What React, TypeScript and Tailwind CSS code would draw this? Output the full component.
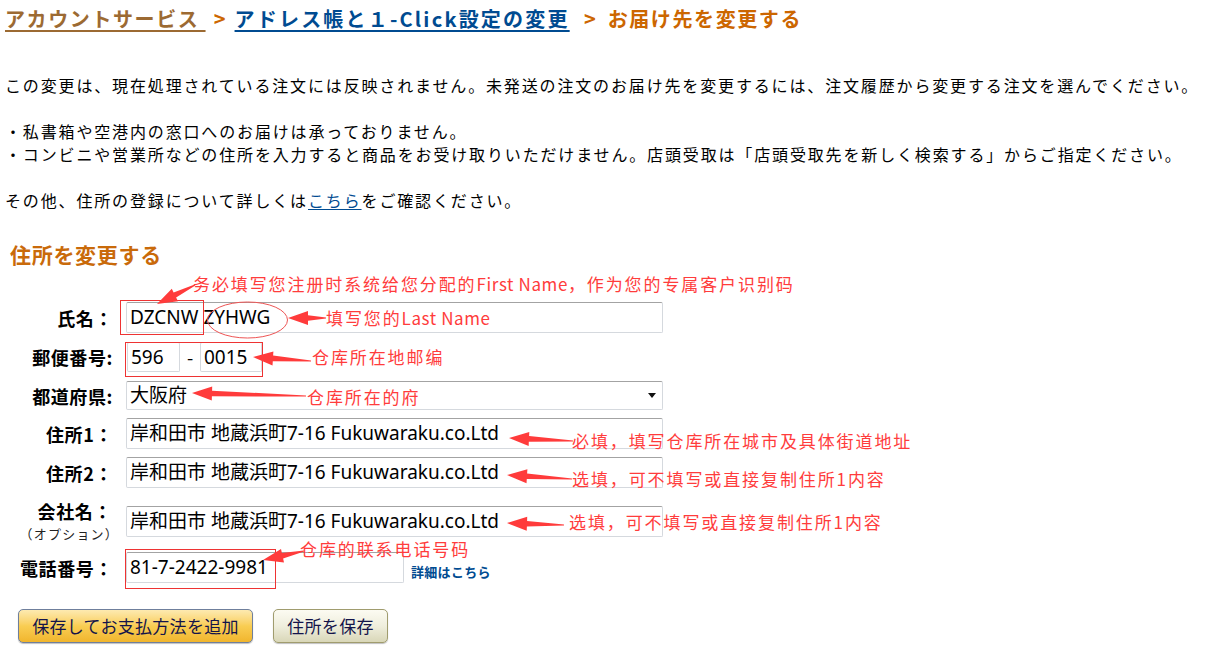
import React from 'react';

/* ── Address change form (Amazon JP) with red CN annotations ── */

type Pt = [number, number];

// tapered annotation arrow: thin tail, wide head at the tip
function arrowPoints(tail: Pt, tip: Pt, head = 20, hw = 7, sw0 = 2.8, sw1 = 0.6) {
  const dx = tip[0] - tail[0];
  const dy = tip[1] - tail[1];
  const len = Math.hypot(dx, dy);
  const ux = dx / len;
  const uy = dy / len;
  const nx = -uy;
  const ny = ux;
  const bx = tip[0] - ux * head;
  const by = tip[1] - uy * head;
  const p = (x: number, y: number) => `${x.toFixed(1)},${y.toFixed(1)}`;
  return [
    p(tail[0] + nx * sw1, tail[1] + ny * sw1),
    p(bx + nx * sw0, by + ny * sw0),
    p(bx + nx * hw, by + ny * hw),
    p(tip[0], tip[1]),
    p(bx - nx * hw, by - ny * hw),
    p(bx - nx * sw0, by - ny * sw0),
    p(tail[0] - nx * sw1, tail[1] - ny * sw1),
  ].join(' ');
}

const arrows: { tail: Pt; tip: Pt }[] = [
  { tail: [195, 285], tip: [157, 304] },
  { tail: [326, 318], tip: [288, 318] },
  { tail: [311, 361], tip: [253, 357] },
  { tail: [306, 396], tip: [192, 393] },
  { tail: [573, 441], tip: [509, 438] },
  { tail: [572, 479], tip: [507, 475] },
  { tail: [564, 525], tip: [507, 523] },
  { tail: [304, 551], tip: [263, 560] },
];

const Latin = ({ children }: { children: React.ReactNode }) => (
  <span className="tracking-[0.6px]">{children}</span>
);

const notes: { text: React.ReactNode; left: string; top: string }[] = [
  {
    text: (
      <>
        务必填写您注册时系统给您分配的<Latin>First Name</Latin>，作为您的专属客户识别码
      </>
    ),
    left: 'left-[193px]',
    top: 'top-[272px]',
  },
  {
    text: (
      <>
        填写您的<Latin>Last Name</Latin>
      </>
    ),
    left: 'left-[326px]',
    top: 'top-[306px]',
  },
  { text: '仓库所在地邮编', left: 'left-[312px]', top: 'top-[345px]' },
  { text: '仓库所在的府', left: 'left-[307px]', top: 'top-[385px]' },
  { text: '必填，填写仓库所在城市及具体街道地址', left: 'left-[572px]', top: 'top-[429px]' },
  { text: '选填，可不填写或直接复制住所1内容', left: 'left-[572px]', top: 'top-[467px]' },
  { text: '选填，可不填写或直接复制住所1内容', left: 'left-[569px]', top: 'top-[510px]' },
  { text: '仓库的联系电话号码', left: 'left-[300px]', top: 'top-[537px]' },
];

const ADDRESS = '岸和田市 地蔵浜町7-16 Fukuwaraku.co.Ltd';

const fieldBox =
  "flex items-center rounded-[2px] border border-[#d5d9de] border-t-[#a3a3a3] bg-white pl-[3px] text-[19px] text-black font-['Noto_Sans','Noto_Sans_CJK_JP',sans-serif] whitespace-nowrap";

function Label({ children }: { children: React.ReactNode }) {
  return <div className="w-[108px] shrink-0 text-right text-[18px] font-bold leading-[24px] tracking-[0.6px]">{children}</div>;
}

export default function App() {
  return (
    <div className="relative h-[652px] w-[1206px] overflow-hidden bg-white pl-[5px] text-black font-['Noto_Sans_CJK_JP','Noto_Sans_CJK_SC',sans-serif]">
      {/* ── Breadcrumb ───────────────────────── */}
      <div className="pt-[6px] text-[20px] font-bold leading-[26px] tracking-[1.6px] whitespace-nowrap text-[#cc6600]">
        <a href="#" className="text-[#9c6a32] underline underline-offset-[3px]">アカウントサービス&nbsp;</a>
        <span className="inline-block w-[29px] pl-[1px] text-center">&gt;</span>
        <a href="#" className="tracking-[2.2px] text-[#004b91] underline underline-offset-[3px]">アドレス帳と１-Click設定の変更</a>
        <span className="inline-block w-[38px] pl-[4px] text-center">&gt;</span>
        <span>お届け先を変更する</span>
      </div>

      {/* ── Notes ────────────────────────────── */}
      <div className="mt-[42px] text-[16px] leading-[23px] tracking-[1.85px] whitespace-nowrap">
        <p>この変更は、現在処理されている注文には反映されません。未発送の注文のお届け先を変更するには、注文履歴から変更する注文を選んでください。</p>
        <p className="mt-[23px]">・私書箱や空港内の窓口へのお届けは承っておりません。</p>
        <p>・コンビニや営業所などの住所を入力すると商品をお受け取りいただけません。店頭受取は「店頭受取先を新しく検索する」からご指定ください。</p>
        <p className="mt-[23px]">
          その他、住所の登録について詳しくは
          <a href="#" className="text-[#004b91] underline underline-offset-[2px]">こちら</a>
          をご確認ください。
        </p>
      </div>

      <h2 className="mt-[28px] pl-[5px] text-[21px] font-bold leading-[28px] tracking-[0.7px] text-[#c96a0a]">住所を変更する</h2>

      {/* ── Form ─────────────────────────────── */}
      <div className="flex flex-col">
        <div className="mt-[34px] flex h-[31px] items-center">
          <Label>氏名：</Label>
          <div className={`${fieldBox} ml-[13px] h-[31px] w-[537px]`}>DZCNW&nbsp;ZYHWG</div>
        </div>

        <div className="mt-[9px] flex h-[30px] items-center">
          <Label>郵便番号:</Label>
          <div className={`${fieldBox} ml-[14px] h-[30px] w-[53px]`}>596</div>
          <span className="w-[20px] text-center text-[18px]">-</span>
          <div className={`${fieldBox} h-[30px] w-[62px]`}>0015</div>
        </div>

        <div className="mt-[9px] flex h-[29px] items-center">
          <Label>都道府県:</Label>
          <div className={`${fieldBox} ml-[13px] h-[29px] w-[537px] justify-between pr-[6px]`}>
            <span>大阪府</span>
            <svg width="8" height="5" viewBox="0 0 8 5">
              <path d="M0 0h8L4 5z" fill="#111" />
            </svg>
          </div>
        </div>

        <div className="mt-[8px] flex h-[31px] items-center">
          <Label>住所1：</Label>
          <div className={`${fieldBox} ml-[13px] h-[31px] w-[537px]`}>{ADDRESS}</div>
        </div>

        <div className="mt-[8px] flex h-[31px] items-center">
          <Label>住所2：</Label>
          <div className={`${fieldBox} ml-[13px] h-[31px] w-[537px]`}>{ADDRESS}</div>
        </div>

        <div className="mt-[10px] flex h-[48px] items-start">
          <div className="w-[108px] shrink-0 text-right">
            <div className="pr-[1px] text-[18px] font-bold leading-[26px] tracking-[0.6px]">会社名：</div>
            <div className="mr-[-6px] text-[13px] leading-[20px] tracking-[1.2px] text-[#222]">（オプション）</div>
          </div>
          <div className={`${fieldBox} ml-[13px] mt-[8px] h-[31px] w-[537px]`}>{ADDRESS}</div>
        </div>

        <div className="mt-[6px] flex h-[31px] items-center">
          <Label>電話番号：</Label>
          <div className={`${fieldBox} ml-[13px] h-[31px] w-[278px]`}>81-7-2422-9981</div>
          <a href="#" className="ml-[7px] mt-[8px] text-[13px] font-bold tracking-[0.3px] text-[#004b91]">詳細はこちら</a>
        </div>

        {/* ── Buttons ───────────────────────── */}
        <div className="mt-[26px] flex items-center gap-[20px] pl-[13px]">
          <button className="h-[34px] w-[235px] rounded-[5px] border border-[#6f7f9c] bg-gradient-to-b from-[#fdeab0] via-[#f9cd52] to-[#f1b52c] text-[17px] tracking-[0.3px] text-[#14144a] shadow-[0_1px_1px_rgba(0,0,0,0.25)]">
            保存してお支払方法を追加
          </button>
          <button className="h-[34px] w-[115px] rounded-[5px] border border-[#a09c6e] bg-gradient-to-b from-[#fcfbf2] via-[#efeedd] to-[#d9d7b8] text-[17px] tracking-[0.3px] text-[#14144a] shadow-[0_1px_1px_rgba(0,0,0,0.25)]">
            住所を保存
          </button>
        </div>
      </div>

      {/* ── Red annotations over the form ───── */}
      <svg className="pointer-events-none absolute left-0 top-0" width="1206" height="652">
        <rect x="120.5" y="300.5" width="83" height="34" fill="none" stroke="#ee3333" strokeWidth="1" />
        <ellipse cx="247.5" cy="320" rx="40" ry="18" fill="none" stroke="#ee5555" strokeWidth="1" />
        <rect x="125.5" y="342.5" width="137" height="34" fill="none" stroke="#ee3333" strokeWidth="1" />
        <rect x="125.5" y="549.5" width="150" height="39" fill="none" stroke="#ee3333" strokeWidth="1" />
        {arrows.map((a, i) => (
          <polygon key={i} points={arrowPoints(a.tail, a.tip)} fill="#ff3b3b" />
        ))}
      </svg>
      {notes.map((n, i) => (
        <div
          key={i}
          className={`absolute ${n.left} ${n.top} whitespace-nowrap text-[17px] leading-[24px] tracking-[1.9px] text-[#ff3c3c] font-['Noto_Sans_CJK_SC',sans-serif]`}
        >
          {n.text}
        </div>
      ))}
    </div>
  );
}
